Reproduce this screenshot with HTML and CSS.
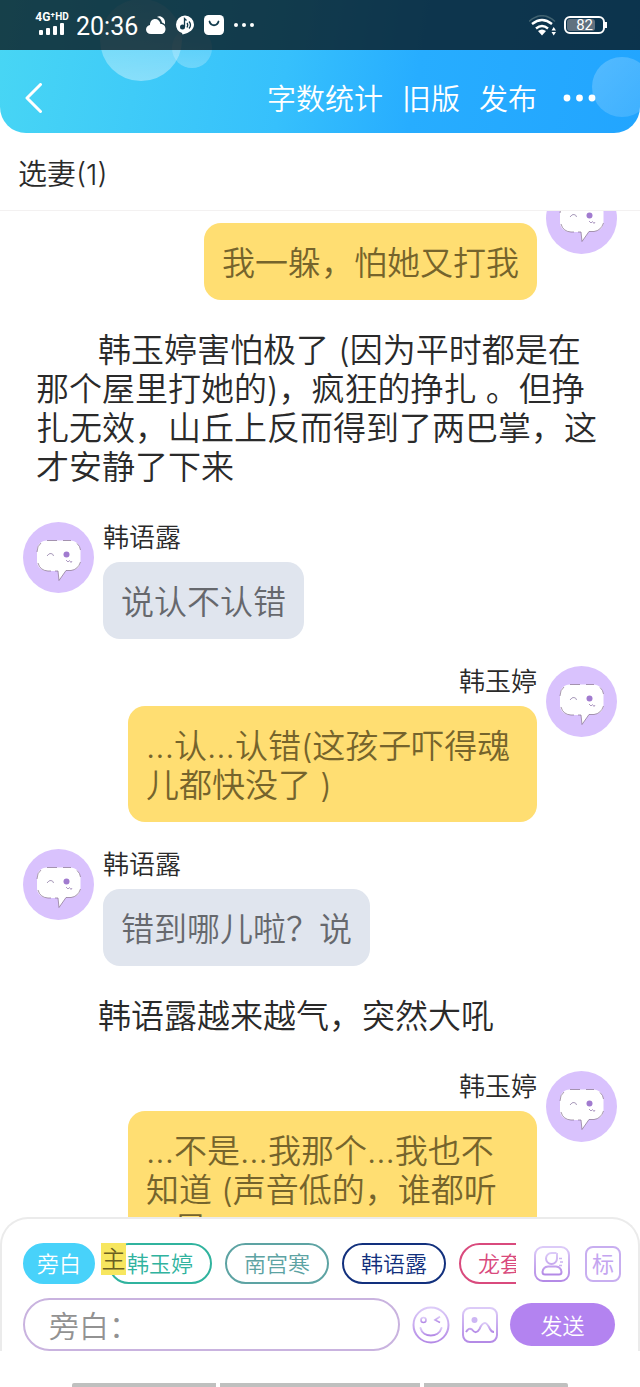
FILE: index.html
```html
<!DOCTYPE html>
<html lang="zh-CN">
<head>
<meta charset="utf-8">
<meta name="viewport" content="width=device-width, initial-scale=1">
<title>选妻(1)</title>
<link rel="stylesheet" href="styles.css">
</head>
<body>
<svg class="defs" aria-hidden="true">
  <defs>
    <linearGradient id="violet" x1="0" y1="0" x2="0" y2="1">
      <stop offset="0" stop-color="#dccbf8"/>
      <stop offset="1" stop-color="#b48ae6"/>
    </linearGradient>
    <symbol id="face" viewBox="0 0 71 71">
      <circle cx="35.500" cy="35.500" r="35.500" fill="#d9c2fd"/>
      <path d="M24 18.500H47C53 18.500 57.500 23 57.500 29V39C57.500 45 53 48.500 47 48.500H43L36 58.500L35 49H25C18 49 14 44.500 14 39V29C14 23 18 18.500 24 18.500Z" fill="#fff"/>
      <path d="M15 41Q17 48.500 25 49H28M32 49H35L36 58.500L43 48.500L48 48.500Q55 47.500 57.500 40M54 21.500Q57 24 57.500 28M14 30Q14 24 18 21M24 18.500H34M40 18.500H48" fill="none" stroke="#85718d" stroke-width=".7"/>
      <path d="M24 34Q26 31 28 31.500Q30.500 32 30.500 34" fill="none" stroke="#a89aba" stroke-width="1"/>
      <circle cx="43.500" cy="32.500" r="3" fill="#a17bcf"/>
      <path d="M43 38L45 40L46.500 38.500L48 40.500L49 39" fill="none" stroke="#a590bb" stroke-width=".9"/>
    </symbol>
  </defs>
</svg>
<div class="app">
  <header class="header">
    <span class="orb orb-large"></span>
    <span class="orb orb-small"></span>
    <span class="orb orb-right"></span>
    <div class="status">
      <div class="signal">
        <span class="network">4G⁺<span class="hd">HD</span></span>
        <svg width="26" height="12" viewBox="0 0 26 12" fill="#fff"><rect y="7" width="4" height="5" rx="1"/><rect x="7" y="5" width="4" height="7" rx="1"/><rect x="14" y="3" width="4" height="9" rx="1"/><rect x="21" width="4" height="12" rx="1"/></svg>
      </div>
      <time class="clock">20:36</time>
      <svg class="status-icon" width="20" height="20" viewBox="0 0 20 20" fill="#fff"><path d="M5 19C2 19 0 17 0 14.500C0 12 2 10.500 4 10C4 6 6.500 4 9 4C12 4 14 6 14.500 9C18 9 19.500 11.500 19.500 14C19.500 17 17.500 19 15 19Z"/><path d="M11 2C14 0 19 3 19 7V9.500C18 8.500 17 8 16 7.500C15.500 5 14 2.500 11 2Z"/></svg>
      <svg class="status-icon" width="20" height="20" viewBox="0 0 20 20"><path d="M10 .5A9 9 0 0 1 19 9.500C19 14 15 18 7.500 19.500L7 18A9 9 0 0 1 1 9.500A9 9 0 0 1 10 .5Z" fill="#fff"/><circle cx="7.500" cy="12" r="2.500" fill="#123b4d"/><path d="M9.500 12V3.500L11.500 5.500M12 8Q13.500 10 12 12.500M14 6.500Q17 10 14 13.500" stroke="#123b4d" stroke-width="1.300" fill="none"/></svg>
      <svg class="status-icon" width="20" height="20" viewBox="0 0 20 20"><rect width="20" height="20" rx="4.500" fill="#fff"/><path d="M5.500 6.500C7 11.500 13 11.500 14.500 6.500" fill="none" stroke="#123b4d" stroke-width="1.800" stroke-linecap="round"/></svg>
      <svg width="22" height="6" viewBox="0 0 22 6" fill="#fff"><circle cx="3" cy="3" r="2"/><circle cx="11" cy="3" r="2"/><circle cx="19" cy="3" r="2"/></svg>
      <span class="spacer"></span>
      <svg width="28" height="21" viewBox="0 0 28 21" fill="none" stroke="#fff" stroke-width="2.400"><path d="M0 6.500Q13 -5 26 6.500" stroke="#40616f" stroke-width="1.600"/><path d="M3 9Q13 1 23 9M7 13.500Q13 8.500 19 13.500"/><path d="M9 16Q13 13 17 16L13 20.500Z" fill="#fff" stroke="none"/><path d="M22.500 15.500L24.700 12L27 15.500ZM22.500 17L24.700 20.500L27 17Z" fill="#fff" stroke="none"/></svg>
      <div class="battery"><span class="battery-level">82</span></div>
    </div>
    <nav class="nav">
      <button class="back" aria-label="返回"><svg width="18" height="30" viewBox="0 0 18 30" fill="none" stroke="#fff" stroke-width="3" stroke-linecap="round" stroke-linejoin="round"><path d="M15.500 1.500L2 15L15.500 28.500"/></svg></button>
      <span class="spacer"></span>
      <button class="nav-item">字数统计</button>
      <button class="nav-item">旧版</button>
      <button class="nav-item">发布</button>
      <button class="more" aria-label="更多"><svg width="34" height="8" viewBox="0 0 34 8" fill="#fff"><circle cx="4" cy="4" r="3.400"/><circle cx="16.500" cy="4" r="3.400"/><circle cx="29" cy="4" r="3.400"/></svg></button>
    </nav>
  </header>
  <h1 class="title">选妻(1)</h1>
  <main class="chat">
    <div class="thread">
      <section class="message own">
        <svg class="avatar"><use href="#face"/></svg>
        <div class="content"><div class="name"></div><p class="bubble">我一躲，怕她又打我</p></div>
      </section>
      <p class="narration">韩玉婷害怕极了 (因为平时都是在那个屋里打她的)，疯狂的挣扎 。但挣扎无效，山丘上反而得到了两巴掌，这才安静了下来</p>
      <section class="message">
        <svg class="avatar"><use href="#face"/></svg>
        <div class="content"><div class="name">韩语露</div><p class="bubble">说认不认错</p></div>
      </section>
      <section class="message own">
        <svg class="avatar"><use href="#face"/></svg>
        <div class="content"><div class="name">韩玉婷</div><p class="bubble">...认...认错(这孩子吓得魂儿都快没了 )</p></div>
      </section>
      <section class="message">
        <svg class="avatar"><use href="#face"/></svg>
        <div class="content"><div class="name">韩语露</div><p class="bubble">错到哪儿啦？说</p></div>
      </section>
      <p class="narration">韩语露越来越气，突然大吼</p>
      <section class="message own">
        <svg class="avatar"><use href="#face"/></svg>
        <div class="content"><div class="name">韩玉婷</div><p class="bubble">...不是...我那个...我也不知道 (声音低的，谁都听<br>...是</p></div>
      </section>
    </div>
  </main>
  <footer class="composer">
    <div class="row">
      <div class="roles">
        <button class="chip narrator">旁白</button>
        <button class="chip teal">韩玉婷<span class="lead">主</span></button>
        <button class="chip grey-teal">南宫寒</button>
        <button class="chip navy">韩语露</button>
        <button class="chip pink">龙套</button>
      </div>
      <button class="tool" aria-label="角色"><svg width="36" height="36" viewBox="0 0 36 36" fill="none" stroke="url(#violet)" stroke-width="2"><rect x="1" y="1" width="34" height="34" rx="8"/><path d="M22.500 7H17.500A5.500 5.500 0 1 0 23 12.500V7M11 28.500Q8.500 28.500 8.500 26Q9 21 14 20.500H22Q27 21 27.500 26Q27.500 28.500 25 28.500Z"/><path d="M25 12.500H28M26 16H29M25 19.500H28" stroke="#ccb4f1" stroke-width="1.300"/></svg></button>
      <button class="tool mark">标</button>
    </div>
    <div class="row entry">
      <input class="field" type="text" placeholder="旁白：" aria-label="旁白">
      <button class="tool" aria-label="表情"><svg width="38" height="38" viewBox="0 0 38 38" fill="none" stroke="url(#violet)" stroke-width="2"><circle cx="19" cy="19" r="17.500"/><circle cx="11.500" cy="14" r="2.500" stroke-width="1.600"/><path d="M28 10.500L23 14L28 16.500" stroke-width="1.600"/><path d="M8.500 22C11 32 26.500 32 29.500 22" stroke-linecap="round"/></svg></button>
      <button class="tool" aria-label="图片"><svg width="36" height="36" viewBox="0 0 36 36" fill="none" stroke="url(#violet)" stroke-width="2"><rect x="1" y="1" width="34" height="34" rx="7"/><circle cx="12.500" cy="13" r="3" fill="#cdb6f3" stroke="none"/><path d="M4 25Q7 20 10 22.500Q14 28 17.500 22Q20 16 23 16Q25 16 28 22Q29.500 25 32 25"/></svg></button>
      <button class="send">发送</button>
    </div>
  </footer>
  <div class="gestures"><span></span><span></span><span></span></div>
</div>
</body>
</html>
```

FILE: styles.css
```css
* { box-sizing: border-box; }
body {
  margin: 0;
  background: #fff;
  color: #2a2a2a;
  font-family: Inter, "Noto Sans CJK SC", sans-serif;
  font-weight: 350;
  text-spacing-trim: space-all;
}
button, input { font: inherit; color: inherit; padding: 0; margin: 0; border: 0; background: none; }
svg { display: block; flex: none; }
.defs { position: absolute; width: 0; height: 0; }
.app { display: flex; flex-direction: column; height: 100vh; }
.spacer { flex: 1; }

.header {
  position: relative;
  flex: none;
  overflow: hidden;
  border-radius: 0 0 26px 26px;
  background: linear-gradient(100deg, #48d6f4 0%, #36c0fc 45%, #27adff 65%, #22a5ff 100%);
  color: #fff;
}
.orb { position: absolute; border-radius: 50%; }
.orb-large { left: 100px; top: -1px; width: 82px; height: 82px; background: linear-gradient(rgba(255,255,255,.15), rgba(255,255,255,.38)); }
.orb-small { left: 172px; top: 28px; width: 40px; height: 40px; background: linear-gradient(rgba(255,255,255,.1), rgba(255,255,255,.25)); }
.orb-right { right: -12px; top: 57px; width: 60px; height: 60px; background: linear-gradient(135deg, rgba(255,255,255,.22), rgba(255,255,255,.12)); }
.status {
  position: relative;
  display: flex;
  align-items: center;
  height: 50px;
  padding: 0 35px;
  background: rgba(5, 13, 17, .75);
}
.signal { display: flex; flex-direction: column; align-items: center; width: 34px; margin-right: 7px; padding-bottom: 4px; }
.network { font: 700 12px/12px Roboto, sans-serif; white-space: nowrap; }
.hd { font-size: 10px; vertical-align: 1px; }
.clock { padding-top: 3px; font: 400 25px/47px Roboto, sans-serif; margin-right: 8px; }
.status-icon { margin-right: 9px; }
.battery {
  position: relative;
  width: 41px;
  height: 18px;
  margin-left: 7px;
  padding: 1px;
  border: 2px solid #fff;
  border-radius: 6px;
}
.battery::after { content: ""; position: absolute; right: -4px; top: 4px; width: 2px; height: 6px; background: #fff; }
.battery-level {
  display: block;
  width: 28px;
  border-radius: 3px;
  background: #60717f;
  font: 400 15px/12px Roboto, sans-serif;
  text-align: right;
  padding-right: 2px;
}
.nav { position: relative; display: flex; align-items: center; gap: 19px; height: 83px; padding: 13px 43px 0 25px; }
.nav-item { padding-top: 4px; font-size: 29px; line-height: 40px; }
.more { padding: 0 0 0 7px; }

.title {
  flex: none;
  margin: 0;
  padding: 22px 18px 15px;
  border-bottom: 1px solid #f3f1f1;
  font-size: 29px;
  font-weight: 350;
  line-height: 40px;
}
.chat { flex: 1; min-height: 0; overflow: hidden; }
.thread { display: flex; flex-direction: column; gap: 27px; margin-top: -28px; }
.message { display: flex; align-items: flex-start; gap: 9px; padding: 0 23px; }
.own { flex-direction: row-reverse; }
.avatar { width: 71px; height: 71px; }
.content { display: flex; flex-direction: column; align-items: flex-start; max-width: 409px; }
.own .content { align-items: flex-end; }
.name { height: 40px; font-size: 26px; line-height: 32px; }
.bubble {
  margin: 0;
  padding: 21px 18px 17px;
  border-radius: 17px;
  background: #e0e5ee;
  color: #66686d;
  font-size: 33px;
  line-height: 39px;
}
.own .bubble { background: #ffde72; color: #75642c; }
.narration { margin: 0; padding: 4px 36px 8px; font-size: 33px; line-height: 39px; text-indent: 62px; }

.composer {
  flex: none;
  display: flex;
  flex-direction: column;
  gap: 10px;
  padding: 20px 17px 0 21px;
  border: 2px solid #ebebeb;
  border-bottom: 0;
  border-radius: 28px 28px 0 0;
}
.row { display: flex; align-items: center; gap: 15px; }
.roles { display: flex; flex: 1; gap: 13px; min-width: 0; margin-right: 3px; padding: 4px 0; overflow: hidden; }
.chip {
  position: relative;
  flex: none;
  height: 41px;
  padding: 2px 17px 0;
  border: 2px solid;
  border-radius: 21px;
  font-size: 22px;
  line-height: 35px;
}
.narrator { padding: 2px 12px 0; border-color: #48d2fa; background: #48d2fa; color: #fff; }
.teal { color: #30b39e; }
.grey-teal { color: #5da3a3; }
.navy { color: #12307d; }
.pink { color: #d94a7d; }
.lead {
  position: absolute;
  left: -9px;
  top: -2px;
  width: 25px;
  height: 32px;
  background: #f7e65f;
  color: #6b6022;
  font-size: 24px;
  line-height: 34px;
}
.tool { flex: none; }
.mark { width: 36px; height: 36px; border: 2px solid #c8aef0; border-radius: 8px; color: #c4a5f0; font-size: 22px; font-weight: 400; line-height: 32px; }
.entry { gap: 12px; padding-right: 6px; }
.field {
  flex: 1;
  min-width: 0;
  height: 53px;
  padding: 2px 24px 0;
  border: 2px solid #c9b3df;
  border-radius: 27px;
  font-size: 30px;
  outline: 0;
}
.field::placeholder { color: #929292; opacity: 1; }
.send { width: 105px; height: 43px; padding-top: 2px; border-radius: 22px; background: #b383f0; color: #fff; font-size: 22px; line-height: 40px; }
.gestures { display: flex; flex: none; align-items: flex-end; gap: 4px; height: 36px; padding: 0 72px; }
.gestures span { flex: 1; height: 4px; background: #bfc0bf; }
.gestures span:nth-child(2) { flex-grow: 1.4; }
.gestures span:first-child { border-top-left-radius: 2px; }
.gestures span:last-child { border-top-right-radius: 2px; }
```
